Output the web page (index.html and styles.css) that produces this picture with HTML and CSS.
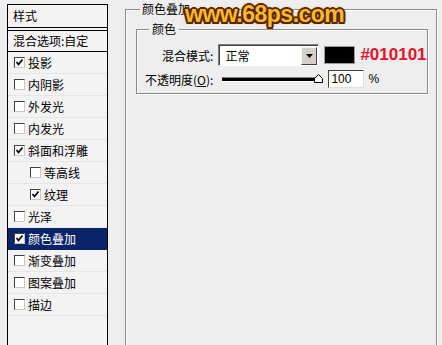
FILE: index.html
```html
<!DOCTYPE html>
<html lang="zh-CN">
<head>
    <meta charset="UTF-8">
    <title>颜色叠加</title>
    <link rel="stylesheet" href="styles.css">
</head>
<body>
    <div class="styles-panel">
        <div class="panel-head">样式</div>
        <div class="panel-blend">混合选项:自定</div>
        <ul class="effect-list">
            <li class="effect"><span class="check on"><svg viewBox="0 0 9 9"><path d="M1.5 4 L3.5 6.5 L7.5 1.5"/></svg></span>投影</li>
            <li class="effect"><span class="check"></span>内阴影</li>
            <li class="effect"><span class="check"></span>外发光</li>
            <li class="effect"><span class="check"></span>内发光</li>
            <li class="effect"><span class="check on"><svg viewBox="0 0 9 9"><path d="M1.5 4 L3.5 6.5 L7.5 1.5"/></svg></span>斜面和浮雕</li>
            <li class="effect sub"><span class="check"></span>等高线</li>
            <li class="effect sub"><span class="check on"><svg viewBox="0 0 9 9"><path d="M1.5 4 L3.5 6.5 L7.5 1.5"/></svg></span>纹理</li>
            <li class="effect"><span class="check"></span>光泽</li>
            <li class="effect selected"><span class="check on"><svg viewBox="0 0 9 9"><path d="M1.5 4 L3.5 6.5 L7.5 1.5"/></svg></span>颜色叠加</li>
            <li class="effect"><span class="check"></span>渐变叠加</li>
            <li class="effect"><span class="check"></span>图案叠加</li>
            <li class="effect"><span class="check"></span>描边</li>
        </ul>
    </div>

    <div class="settings">
        <fieldset class="group outer">
            <legend>颜色叠加</legend>
            <fieldset class="group inner">
                <legend>颜色</legend>
                <div class="form-grid">
                    <label>混合模式:</label>
                    <div class="row">
                        <div class="select">
                            <span class="select-text">正常</span>
                            <span class="drop"><svg viewBox="0 0 7 4"><path d="M0 0 H7 L3.5 4 Z"/></svg></span>
                        </div>
                        <span class="swatch"></span>
                        <span class="hex">#010101</span>
                    </div>
                    <label>不透明度(<u>O</u>):</label>
                    <div class="row">
                        <div class="slider">
                            <span class="track"></span>
                            <svg class="thumb" viewBox="0 0 9 9"><path d="M0.5 8.5 V4.5 L4.5 0.5 L8.5 4.5 V8.5 Z"/></svg>
                        </div>
                        <span class="num">100</span>
                        <span class="unit">%</span>
                    </div>
                </div>
            </fieldset>
        </fieldset>
    </div>

    <div class="watermark">www.68ps.com</div>
</body>
</html>
```

FILE: styles.css
```css
body {
    margin: 0;
    height: 345px;
    overflow: hidden;
    display: flex;
    align-items: flex-start;
    background: #eeeeee;
    font-family: "Noto Sans CJK SC", sans-serif;
    font-size: 12px;
    color: #000;
}

/* left list of effects */
.styles-panel {
    box-sizing: border-box;
    width: 101px;
    height: 341px;
    margin: 4px 0 0 7px;
    border: 1px solid #000;
    border-bottom: none;
    background: #f3f3f3;
}
.panel-head {
    height: 22px;
    line-height: 22px;
    padding-left: 5px;
    border-bottom: 1px solid #000;
}
.panel-blend {
    height: 20px;
    line-height: 20px;
    margin-top: 2px;
    padding-left: 5px;
    border-top: 1px solid #000;
    border-bottom: 1px solid #000;
}
.effect-list {
    list-style: none;
    margin: 0;
    padding: 0;
}
.effect {
    box-sizing: border-box;
    height: 22px;
    display: flex;
    align-items: center;
    gap: 3px;
    padding-left: 6px;
    border-bottom: 1px solid #e6e6e6;
}
.effect.sub {
    padding-left: 22px;
}
.effect.selected {
    background: #0a246a;
    color: #fff;
    border-bottom-color: #0a246a;
}
.check {
    box-sizing: border-box;
    width: 11px;
    height: 11px;
    border: 1px solid;
    border-color: #404040 #c8c8c8 #c8c8c8 #404040;
    background: #fff;
    display: flex;
}
.check svg {
    width: 9px;
    height: 9px;
}
.check path {
    fill: none;
    stroke: #000;
    stroke-width: 1.7;
}

/* right settings */
.settings {
    margin-left: 17px;
}
.group {
    margin: 0;
    border: 1px solid #8c8c8c;
    box-shadow: inset 1px 1px 0 #fff, 1px 1px 0 #fff;
}
.group legend {
    line-height: 14px;
    padding: 0 2px;
    background: #eeeeee;
}
.outer {
    box-sizing: border-box;
    width: 309px;
    height: 343px;
    margin-top: 2px;
    padding: 6px 8px 0 10px;
    border-bottom: none;
}
.outer > legend {
    margin-left: 4px;
}
.inner {
    padding: 8px 0 5px 0;
}
.inner > legend {
    margin-left: 12px;
    padding: 0 3px;
}
.form-grid {
    display: grid;
    grid-template-columns: auto auto;
    justify-content: start;
    align-items: center;
    column-gap: 4px;
    row-gap: 4px;
    padding-left: 8px;
}
.form-grid label {
    justify-self: end;
    white-space: nowrap;
}
.row {
    display: flex;
    align-items: center;
}

.select {
    box-sizing: border-box;
    width: 101px;
    height: 22px;
    margin-left: 1px;
    display: flex;
    align-items: center;
    justify-content: space-between;
    background: #fff;
    border: 1px solid;
    border-color: #808080 #fff #fff #808080;
    box-shadow: inset 1px 1px 0 #404040;
    padding: 1px 1px 0 6px;
}
.drop {
    box-sizing: border-box;
    width: 16px;
    height: 18px;
    display: flex;
    align-items: center;
    justify-content: center;
    background: #d4d0c8;
    border: 1px solid;
    border-color: #f4f4f4 #404040 #404040 #f4f4f4;
}
.drop svg {
    width: 7px;
    height: 4px;
}
.swatch {
    box-sizing: border-box;
    width: 31px;
    height: 18px;
    margin-left: 5px;
    background: #000;
    border: 1px solid #9a9a9a;
}
.hex {
    margin-left: 5px;
    font-family: "Liberation Sans", sans-serif;
    font-size: 17px;
    font-weight: bold;
    color: #e8102a;
}

.slider {
    position: relative;
    width: 101px;
    height: 14px;
    margin-left: 5px;
    display: flex;
    align-items: center;
}
.track {
    width: 96px;
    height: 3px;
    background: #000;
    border-top: 1px solid #808080;
    border-bottom: 1px solid #fff;
}
.thumb {
    position: absolute;
    right: 0;
    top: 2px;
    width: 9px;
    height: 9px;
}
.thumb path {
    fill: #fff;
    stroke: #000;
}
.num {
    box-sizing: border-box;
    width: 36px;
    height: 18px;
    margin-left: 5px;
    padding-left: 2px;
    line-height: 16px;
    font-family: "Liberation Sans", sans-serif;
    background: #fff;
    border: 1px solid;
    border-color: #404040 #e0e0e0 #e0e0e0 #404040;
}
.unit {
    margin-left: 4px;
    font-family: "Liberation Sans", sans-serif;
}

.watermark {
    position: absolute;
    left: 185px;
    top: 1px;
    font-family: "Liberation Sans", sans-serif;
    font-size: 23px;
    font-weight: bold;
    letter-spacing: -0.5px;
    color: #f9b92c;
    text-shadow:
        2px 0 0 #5a2600, -2px 0 0 #5a2600, 0 2px 0 #5a2600, 0 -2px 0 #5a2600,
        1.5px 1.5px 0 #5a2600, -1.5px 1.5px 0 #5a2600, 1.5px -1.5px 0 #5a2600, -1.5px -1.5px 0 #5a2600,
        0 0 4px #d98a20;
}
```
